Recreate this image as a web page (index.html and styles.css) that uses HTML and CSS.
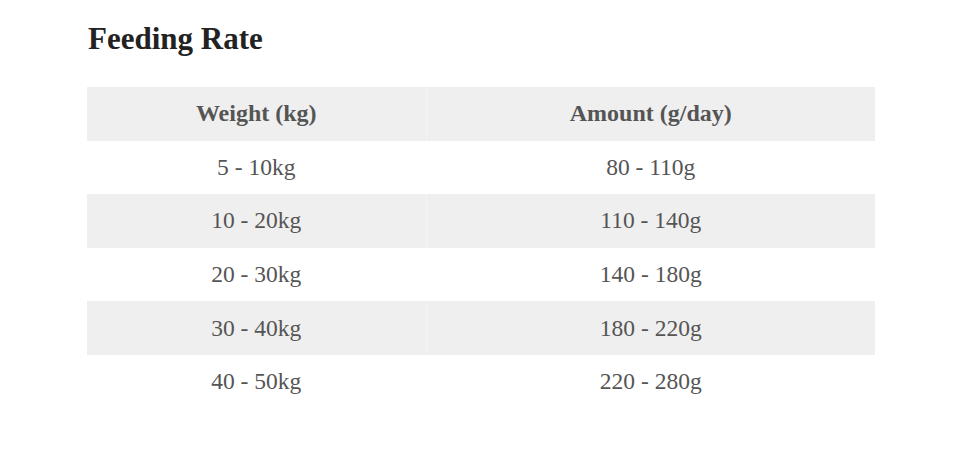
FILE: index.html
```html
<!DOCTYPE html>
<html>
<head>
<meta charset="utf-8">
<link rel="stylesheet" href="styles.css">
</head>
<body>
<section class="feeding">
  <h2 class="title">Feeding Rate</h2>
  <table class="rate-table">
    <colgroup><col class="col-weight"><col class="col-amount"></colgroup>
    <thead>
      <tr><th>Weight (kg)</th><th>Amount (g/day)</th></tr>
    </thead>
    <tbody>
      <tr><td>5 - 10kg</td><td>80 - 110g</td></tr>
      <tr><td>10 - 20kg</td><td>110 - 140g</td></tr>
      <tr><td>20 - 30kg</td><td>140 - 180g</td></tr>
      <tr><td>30 - 40kg</td><td>180 - 220g</td></tr>
      <tr><td>40 - 50kg</td><td>220 - 280g</td></tr>
    </tbody>
  </table>
</section>
</body>
</html>
```
FILE: styles.css
```css
html, body {
  margin: 0;
  padding: 0;
  background: #fff;
}
body {
  font-family: "Liberation Serif", "Times New Roman", serif;
}
.feeding {
  padding: 21px 86px 0 87px;
}
.title {
  margin: 0 0 30px 1px;
  font-size: 31px;
  line-height: 36px;
  font-weight: bold;
  color: #222;
}
.rate-table {
  width: 788px;
  border-collapse: collapse;
  table-layout: fixed;
}
.col-weight { width: 339px; }
.col-amount { width: 449px; }
.rate-table th,
.rate-table td {
  height: 53.6px;
  padding: 0;
  text-align: center;
  vertical-align: middle;
  color: #555;
  font-size: 23.5px;
}
.rate-table th {
  font-weight: bold;
  font-size: 24px;
}
.rate-table td {
  font-weight: normal;
}
.rate-table th + th,
.rate-table td + td {
  border-left: 1px solid #f4f4f4;
}
.rate-table thead tr,
.rate-table tbody tr:nth-child(even) {
  background: #efefef;
}
.rate-table tbody tr:nth-child(odd) td + td {
  border-left-color: #fff;
}
```
